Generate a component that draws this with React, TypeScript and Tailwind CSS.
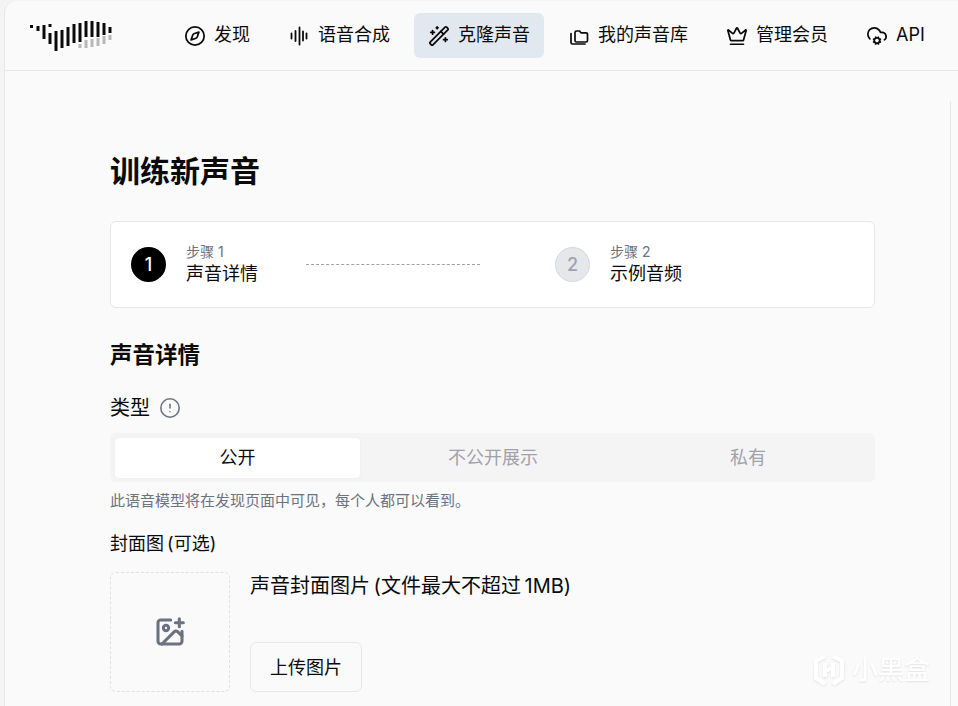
import { CircleAlert, CloudCog, Compass, Crown, ImagePlus, WandSparkles } from 'lucide-react'

const logoBars = [
  [30, 25, 3],
  [36.5, 26, 5],
  [42.5, 25, 14],
  [48.5, 24, 3],
  [48.5, 33, 11],
  [54.5, 31, 20],
  [60.5, 30, 18],
  [66.5, 27, 19],
  [72.5, 24, 19],
  [78.5, 23, 19],
  [84.5, 21, 16],
  [90.5, 21, 16],
  [96.5, 22, 15],
  [102.5, 23, 12],
  [108.5, 27, 6],
]

const logoGrey = [
  [78.5, 44, 4],
  [84.5, 40, 8],
  [90.5, 39, 8],
  [96.5, 38, 8],
  [102.5, 36, 8],
  [108.5, 35, 5],
]

function Logo() {
  return (
    <svg width="84" height="32" viewBox="30 20 84 32" className="shrink-0">
      {logoBars.map(([x, y, h]) => (
        <rect key={`${x}-${y}`} x={x} y={y} width="3" height={h} fill="#0a0a0a" />
      ))}
      {logoGrey.map(([x, y, h]) => (
        <rect key={`${x}-${y}`} x={x} y={y} width="3" height={h} fill="#b8b8b8" />
      ))}
    </svg>
  )
}

function VoiceIcon() {
  return (
    <svg width="22" height="22" viewBox="0 0 22 22" fill="none" stroke="currentColor" strokeWidth="1.8" strokeLinecap="round">
      <path d="M3.5 8.5v5M7.5 6v10M11.5 2.5v17M15 6.5v9M18.5 8.5v5" />
    </svg>
  )
}

function LibraryIcon() {
  return (
    <svg width="22" height="22" viewBox="-2 -2 22 22" fill="none" stroke="currentColor" strokeWidth="1.7" strokeLinejoin="round" strokeLinecap="round">
      <path d="M5 6.5V5.5c0-.9.6-1.5 1.5-1.5h3l1.5 1.8h5c.9 0 1.5.6 1.5 1.5v6.2c0 .9-.6 1.5-1.5 1.5H6.5c-.9 0-1.5-.6-1.5-1.5V6.5Z" />
      <path d="M1 6.5v9c0 .9.6 1.5 1.5 1.5H15" />
    </svg>
  )
}

const navItems = [
  { label: '发现', icon: <Compass size={22} strokeWidth={1.9} /> },
  { label: '语音合成', icon: <VoiceIcon /> },
  { label: '克隆声音', icon: <WandSparkles size={22} strokeWidth={1.9} />, active: true },
  { label: '我的声音库', icon: <LibraryIcon /> },
  { label: '管理会员', icon: <Crown size={22} strokeWidth={1.9} /> },
  { label: 'API', icon: <CloudCog size={22} strokeWidth={1.9} /> },
]

const tabs = ['公开', '不公开展示', '私有']

function Watermark() {
  return (
    <div className="absolute right-[28px] bottom-[18px] flex items-center gap-[6px] text-white [text-shadow:0_1px_2px_rgba(0,0,0,0.1)]">
      <svg width="34" height="36" viewBox="0 0 34 36" fill="none" stroke="#ffffff" strokeWidth="4" className="drop-shadow-[0_1px_1px_rgba(0,0,0,0.1)]">
        <path d="M13 4 4 9v17l9 6" />
        <path d="M21 4l9 5v17l-9 6" />
        <path d="M13 11v14M21 11v14M13 19l8-3" />
      </svg>
      <span className="text-[26px] font-medium leading-none">小黑盒</span>
    </div>
  )
}

export default function App() {
  return (
    <div className="relative h-[706px] w-[958px] overflow-hidden bg-[#f4f4f5] pl-1 pt-px font-['Inter','Noto_Sans_CJK_SC',sans-serif] text-[#0a0a0a]">
      <div className="flex h-full flex-col rounded-tl-xl border-l border-[#e5e7eb] bg-[#fafafa]">
        {/* Header */}
        <header className="flex h-[70px] shrink-0 items-center border-b border-[#e5e7eb] pl-[25px]">
          <Logo />
          <nav className="ml-[56px] flex items-center gap-[10px]">
            {navItems.map((item) => (
              <div
                key={item.label}
                className={`flex h-[45px] items-center gap-2 whitespace-nowrap rounded-md px-[14px] text-[18px] ${item.active ? 'bg-[#e2e8f0]' : ''}`}
              >
                {item.icon}
                <span className="pb-[2px]">{item.label}</span>
              </div>
            ))}
          </nav>
        </header>

        {/* Content */}
        <div className="flex-1 overflow-hidden pt-[30px]">
          <main className="h-full w-[946px] border-r border-[#e5e7eb] pl-[105px] pr-[75px] pt-[50px]">
            <h1 className="text-[30px] font-bold leading-[40px]">训练新声音</h1>

            {/* Stepper */}
            <div className="mt-[30px] flex h-[87px] items-center rounded-md border border-[#e5e7eb] bg-white pl-5">
              <div className="flex h-[35px] w-[35px] items-center justify-center rounded-full bg-black text-[18px] font-medium text-white">1</div>
              <div className="ml-5 w-[120px]">
                <p className="text-[14px] leading-[18px] text-[#6b7280]">步骤 1</p>
                <p className="text-[18px] leading-[26px]">声音详情</p>
              </div>
              <div className="h-0 w-[174px] border-t border-dashed border-[#a1a1aa]" />
              <div className="ml-[75px] flex h-[35px] w-[35px] items-center justify-center rounded-full border border-[#d4d8de] bg-[#e5e7eb] text-[18px] font-medium text-[#9ca3af]">2</div>
              <div className="ml-5">
                <p className="text-[14px] leading-[18px] text-[#6b7280]">步骤 2</p>
                <p className="text-[18px] leading-[26px]">示例音频</p>
              </div>
            </div>

            <h2 className="mt-[30px] text-[22.5px] font-bold leading-[34px]">声音详情</h2>

            {/* Type */}
            <div className="mt-[22px] flex items-center gap-[9px]">
              <span className="text-[20px] leading-[28px]">类型</span>
              <CircleAlert size={22} strokeWidth={1.7} className="text-[#6b7280]" />
            </div>
            <div className="mt-[11px] grid h-[49px] grid-cols-[245px_266px_244px] items-center rounded-md bg-[#f4f4f5] px-[5px]">
              {tabs.map((tab, i) => (
                <div
                  key={tab}
                  className={`flex h-[40px] items-center justify-center rounded-[4px] text-[18px] ${i === 0 ? 'bg-white text-[#0a0a0a] shadow-[0_0_2px_rgba(0,0,0,0.05)]' : 'text-[#a1a1aa]'}`}
                >
                  {tab}
                </div>
              ))}
            </div>
            <p className="mt-2 text-[15px] leading-[22px] text-[#6b7280]">此语音模型将在发现页面中可见，每个人都可以看到。</p>

            {/* Cover */}
            <p className="mt-[19px] text-[18px] leading-[26px] [word-spacing:-2px]">封面图 (可选)</p>
            <div className="mt-[15px] flex gap-5">
              <div className="flex h-[120px] w-[120px] items-center justify-center rounded-md border border-dashed border-[#e0e0e0]">
                <ImagePlus size={32} strokeWidth={2.3} className="text-[#6b7280]" />
              </div>
              <div className="flex flex-col justify-between">
                <p className="text-[20px] leading-[28px] [word-spacing:-2px]">声音封面图片 (文件最大不超过 1MB)</p>
                <button className="flex h-[50px] w-[112px] items-center justify-center rounded-md border border-[#e5e7eb] text-[18px]">上传图片</button>
              </div>
            </div>
          </main>
        </div>
      </div>
      <Watermark />
    </div>
  )
}
